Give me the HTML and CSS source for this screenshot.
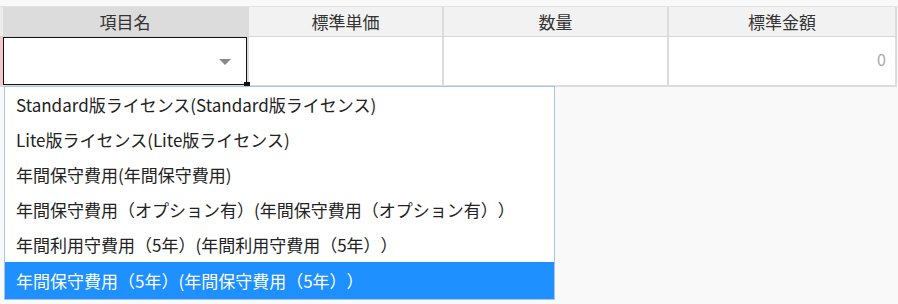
FILE: index.html
```html
<!DOCTYPE html>
<html lang="ja">
<head>
    <meta charset="UTF-8">
    <title>明細</title>
    <link rel="stylesheet" href="styles.css">
</head>
<body>
    <div class="grid">
        <div class="row head">
            <div class="cell gutter"></div>
            <div class="cell c1 active">項目名</div>
            <div class="cell c2">標準単価</div>
            <div class="cell c3">数量</div>
            <div class="cell c4">標準金額</div>
        </div>
        <div class="row data">
            <div class="cell gutter mark"></div>
            <div class="cell c1">
                <div class="editor">
                    <span class="arrow"></span>
                    <span class="handle"></span>
                </div>
            </div>
            <div class="cell c2"></div>
            <div class="cell c3"></div>
            <div class="cell c4 num">0</div>
        </div>

        <div class="dropdown">
            <div class="option">Standard版ライセンス(Standard版ライセンス)</div>
            <div class="option">Lite版ライセンス(Lite版ライセンス)</div>
            <div class="option">年間保守費用(年間保守費用)</div>
            <div class="option">年間保守費用（オプション有）(年間保守費用（オプション有））</div>
            <div class="option">年間利用守費用（5年）(年間利用守費用（5年））</div>
            <div class="option selected">年間保守費用（5年）(年間保守費用（5年））</div>
        </div>
    </div>
</body>
</html>
```

FILE: styles.css
```css
html, body {
    margin: 0;
    min-height: 304px;
}
body {
    background: #f9f9f9;
    font-family: "Noto Sans CJK JP", "Noto Sans", sans-serif;
    color: #222;
}
.grid {
    position: relative;
    padding-top: 6px;
    width: 897px;
    min-height: 298px;
}
.row {
    display: flex;
}
.cell {
    box-sizing: border-box;
    border-right: 2px solid #dcdcdc;
}
.gutter {
    width: 3px;
    border-right: none;
}
.c1 { width: 246px; }
.c2 { width: 195px; }
.c3 { width: 225px; }
.c4 { width: 228px; }

.head {
    height: 29px;
    border-top: 1px solid #e2e2e2;
    border-bottom: 1px solid #d6d6d6;
    background: #f2f2f2;
}
.head .cell {
    font-size: 17px;
    line-height: 29px;
    text-align: center;
    color: #333;
}
.head .gutter {
    background: #ececec;
}
.head .active {
    background: #dcdcdc;
}

.data {
    height: 48px;
    border-bottom: 2px solid #dcdcdc;
    background: #fff;
}
.data .mark {
    background: #f5c9c9;
}
.editor {
    position: relative;
    box-sizing: border-box;
    border: 1px solid #111;
    height: 48px;
}
.arrow {
    position: absolute;
    left: 215px;
    top: 21px;
    border-left: 6px solid transparent;
    border-right: 6px solid transparent;
    border-top: 6px solid #8a8a8a;
}
.handle {
    position: absolute;
    right: -4px;
    bottom: -4px;
    width: 6px;
    height: 6px;
    background: #111;
}
.num {
    font-size: 16px;
    color: #aaa;
    text-align: right;
    padding: 10px 9px 0 0;
}

.dropdown {
    position: absolute;
    left: 4px;
    top: 86px;
    width: 551px;
    box-sizing: border-box;
    background: #fff;
    border: 1px solid #a9c3ea;
}
.option {
    height: 35px;
    line-height: 35px;
    padding-left: 11px;
    font-size: 17px;
    white-space: nowrap;
    text-spacing-trim: space-all;
}
.option.selected {
    height: 37px;
    line-height: 37px;
    background: #1e90ff;
    color: #fff;
}
```
